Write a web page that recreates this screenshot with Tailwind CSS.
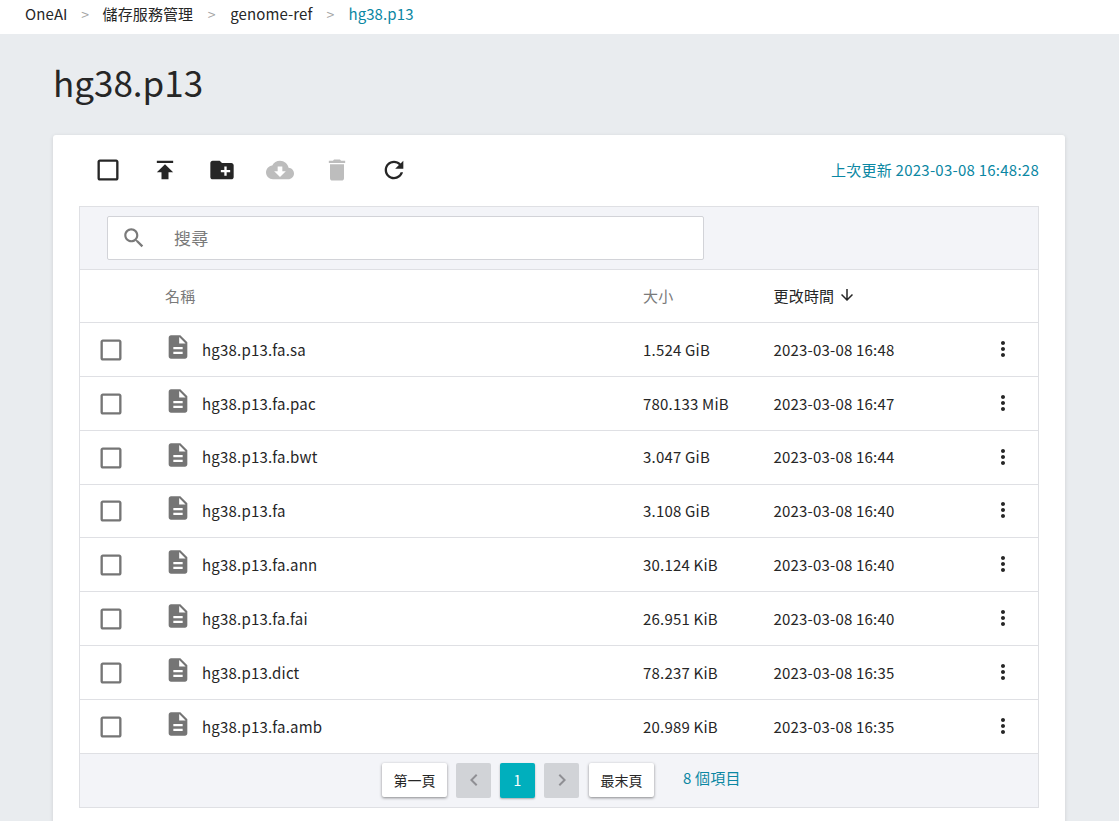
<!DOCTYPE html>
<html lang="zh-Hant">
<head>
  <meta charset="UTF-8">
  <meta name="viewport" content="width=device-width, initial-scale=1.0">
  <title>hg38.p13</title>
  <script src="https://cdn.jsdelivr.net/npm/@tailwindcss/browser@4"></script>
</head>
<body class="h-[821px] overflow-hidden bg-[#e9ecef] text-[15px] tracking-[0.2px] text-[#262626] font-['Noto_Sans_CJK_TC','Noto_Sans',sans-serif]">

  <!-- breadcrumb -->
  <nav class="h-[34px] bg-white flex items-center pl-[25px] pb-[6px] text-[15px] leading-[22px] tracking-[0.1px]">
    <span>OneAI</span>
    <span class="w-[35px] text-center text-[#a3a3a3] text-[14px]">&gt;</span>
    <span>儲存服務管理</span>
    <span class="w-[37px] text-center text-[#a3a3a3] text-[14px]">&gt;</span>
    <span>genome-ref</span>
    <span class="w-[36px] text-center text-[#a3a3a3] text-[14px]">&gt;</span>
    <span class="text-[#0b87a3]">hg38.p13</span>
  </nav>

  <main class="pl-[53px] pr-[54px]">
    <h1 class="h-[101px] pt-[22px] text-[35px] leading-[52px] font-normal tracking-normal">hg38.p13</h1>

    <div class="bg-white rounded-t-[3px] shadow-[0_1px_4px_rgba(0,0,0,0.12)] px-[26px] h-[700px]">
      <!-- toolbar -->
      <div class="h-[71px] flex items-center pl-[15px] pb-[1px]">
        <div class="flex gap-[29.2px] text-[#262626]">
          <svg class="w-[28px] h-[28px]" viewBox="0 0 24 24" fill="currentColor"><path d="M19 5v14H5V5h14m0-2H5c-1.1 0-2 .9-2 2v14c0 1.1.9 2 2 2h14c1.1 0 2-.9 2-2V5c0-1.1-.9-2-2-2z"/></svg>
          <svg class="w-[28px] h-[28px]" viewBox="0 0 24 24" fill="currentColor"><path d="M5 4v2h14V4H5zm0 10h4v6h6v-6h4l-7-7-7 7z"/></svg>
          <svg class="w-[28px] h-[28px]" viewBox="0 0 24 24" fill="currentColor"><path d="M20 6h-8l-2-2H4c-1.11 0-1.99.89-1.99 2L2 18c0 1.11.89 2 2 2h16c1.11 0 2-.89 2-2V8c0-1.11-.89-2-2-2zm-1 8h-3v3h-2v-3h-3v-2h3V9h2v3h3v2z"/></svg>
          <svg class="w-[28px] h-[28px] text-[#bdbdbd]" viewBox="0 0 24 24" fill="currentColor"><path d="M19.35 10.04C18.67 6.59 15.64 4 12 4 9.11 4 6.6 5.64 5.35 8.04 2.34 8.36 0 10.91 0 14c0 3.31 2.69 6 6 6h13c2.76 0 5-2.24 5-5 0-2.64-2.05-4.78-4.65-4.96zM17 13l-5 5-5-5h3V9h4v4h3z"/></svg>
          <svg class="w-[28px] h-[28px] text-[#bdbdbd]" viewBox="0 0 24 24" fill="currentColor"><path d="M6 19c0 1.1.9 2 2 2h8c1.1 0 2-.9 2-2V7H6v12zM19 4h-3.5l-1-1h-5l-1 1H5v2h14V4z"/></svg>
          <svg class="w-[28px] h-[28px]" viewBox="0 0 24 24" fill="currentColor"><path d="M17.65 6.35C16.2 4.9 14.21 4 12 4c-4.42 0-7.99 3.58-7.99 8s3.57 8 7.99 8c3.73 0 6.84-2.55 7.73-6h-2.08c-.82 2.33-3.04 4-5.65 4-3.31 0-6-2.69-6-6s2.69-6 6-6c1.66 0 3.14.69 4.22 1.78L13 11h7V4l-2.35 2.35z"/></svg>
        </div>
        <div class="ml-auto text-[#0b87a3] text-[15px] tracking-[0.25px]">上次更新 2023-03-08 16:48:28</div>
      </div>

      <!-- table -->
      <div class="border border-[#dfe0e4]">
        <div class="h-[62px] bg-[#f3f4f8] pl-[27px] pt-[9px]">
          <div class="w-[597px] h-[44px] bg-white border border-[#d2d3d8] rounded-[2px] flex items-center pl-[13px] text-[#7a7a7a] text-[16px]">
            <svg class="w-[26px] h-[26px]" viewBox="0 0 24 24" fill="currentColor"><path d="M15.5 14h-.79l-.28-.27C15.41 12.59 16 11.11 16 9.5 16 5.91 13.09 3 9.5 3S3 5.91 3 9.5 5.91 16 9.5 16c1.61 0 3.09-.59 4.23-1.57l.27.28v.79l5 4.99L20.49 19l-4.99-5zm-6 0C7.01 14 5 11.99 5 9.5S7.01 5 9.5 5 14 7.01 14 9.5 11.99 14 9.5 14z"/></svg>
            <span class="ml-[27px] text-[17px]">搜尋</span>
          </div>
        </div>

        <div class="h-[53px] border-t border-[#dfe0e4] grid grid-cols-[85px_478px_130.5px_217.5px_24px] items-center">
          <span></span>
          <span class="text-[#7a7a7a]">名稱</span>
          <span class="text-[#7a7a7a]">大小</span>
          <span class="flex items-center gap-[4px]">更改時間
            <svg class="w-[18px] h-[18px] mt-[-2px]" viewBox="0 0 24 24" fill="currentColor"><path d="M20 12l-1.41-1.41L13 16.17V4h-2v12.17l-5.58-5.59L4 12l8 8 8-8z"/></svg>
          </span>
          <span></span>
        </div>

        <div id="rows"></div>

        <!-- pagination -->
        <div class="h-[54.2px] border-t border-[#dfe0e4] bg-[#f3f4f8] flex items-center pl-[301px] text-[14px] tracking-normal">
          <button class="w-[65px] h-[34px] ml-[1px] bg-white rounded-[2px] shadow-[0_1px_3px_rgba(0,0,0,0.45)]">第一頁</button>
          <span class="w-[35px] h-[35px] ml-[9px] bg-[#d1d3d7] rounded-[2px] flex items-center justify-center text-[#8f8f94]">
            <svg class="w-[24px] h-[24px]" viewBox="0 0 24 24" fill="currentColor"><path d="M15.41 7.41L14 6l-6 6 6 6 1.41-1.41L10.83 12z"/></svg>
          </span>
          <span class="w-[35px] h-[35px] ml-[9px] bg-[#00afbd] rounded-[2px] flex items-center justify-center text-white shadow-[0_1px_2px_rgba(0,0,0,0.3)]">1</span>
          <span class="w-[35px] h-[35px] ml-[9px] bg-[#d1d3d7] rounded-[2px] flex items-center justify-center text-[#8f8f94]">
            <svg class="w-[24px] h-[24px]" viewBox="0 0 24 24" fill="currentColor"><path d="M10 6L8.59 7.41 13.17 12l-4.58 4.59L10 18l6-6z"/></svg>
          </span>
          <button class="w-[65px] h-[34px] ml-[10px] bg-white rounded-[2px] shadow-[0_1px_3px_rgba(0,0,0,0.45)]">最末頁</button>
          <span class="ml-[29px] mb-[4px] text-[#0b87a3] text-[15px] tracking-[0.2px]">8 個項目</span>
        </div>
      </div>
    </div>
  </main>

  <script>
    const files = [
      ["hg38.p13.fa.sa", "1.524 GiB", "2023-03-08 16:48"],
      ["hg38.p13.fa.pac", "780.133 MiB", "2023-03-08 16:47"],
      ["hg38.p13.fa.bwt", "3.047 GiB", "2023-03-08 16:44"],
      ["hg38.p13.fa", "3.108 GiB", "2023-03-08 16:40"],
      ["hg38.p13.fa.ann", "30.124 KiB", "2023-03-08 16:40"],
      ["hg38.p13.fa.fai", "26.951 KiB", "2023-03-08 16:40"],
      ["hg38.p13.dict", "78.237 KiB", "2023-03-08 16:35"],
      ["hg38.p13.fa.amb", "20.989 KiB", "2023-03-08 16:35"]
    ];

    document.getElementById("rows").innerHTML = files.map(([name, size, time]) => `
      <div class="h-[53.85px] pt-[1px] border-t border-[#dfe0e4] grid grid-cols-[84px_479px_130.5px_217.5px_24px] items-center">
        <svg class="w-[28px] h-[28px] ml-[17px] text-[#757575]" viewBox="0 0 24 24" fill="currentColor"><path d="M19 5v14H5V5h14m0-2H5c-1.1 0-2 .9-2 2v14c0 1.1.9 2 2 2h14c1.1 0 2-.9 2-2V5c0-1.1-.9-2-2-2z"/></svg>
        <span class="flex items-center">
          <svg class="w-[28px] h-[28px] mt-[-6px] text-[#757575]" viewBox="0 0 24 24" fill="currentColor"><path d="M14 2H6c-1.1 0-1.99.9-1.99 2L4 20c0 1.1.89 2 1.99 2H18c1.1 0 2-.9 2-2V8l-6-6zm2 16H8v-2h8v2zm0-4H8v-2h8v2zm-3-5V3.5L18.5 9H13z"/></svg>
          <span class="ml-[10px]">${name}</span>
        </span>
        <span>${size}</span>
        <span>${time}</span>
        <svg class="w-[24px] h-[24px] mt-[-2px]" viewBox="0 0 24 24" fill="currentColor"><path d="M12 8c1.1 0 2-.9 2-2s-.9-2-2-2-2 .9-2 2 .9 2 2 2zm0 2c-1.1 0-2 .9-2 2s.9 2 2 2 2-.9 2-2-.9-2-2-2zm0 6c-1.1 0-2 .9-2 2s.9 2 2 2 2-.9 2-2-.9-2-2-2z"/></svg>
      </div>`).join("");
  </script>
</body>
</html>
